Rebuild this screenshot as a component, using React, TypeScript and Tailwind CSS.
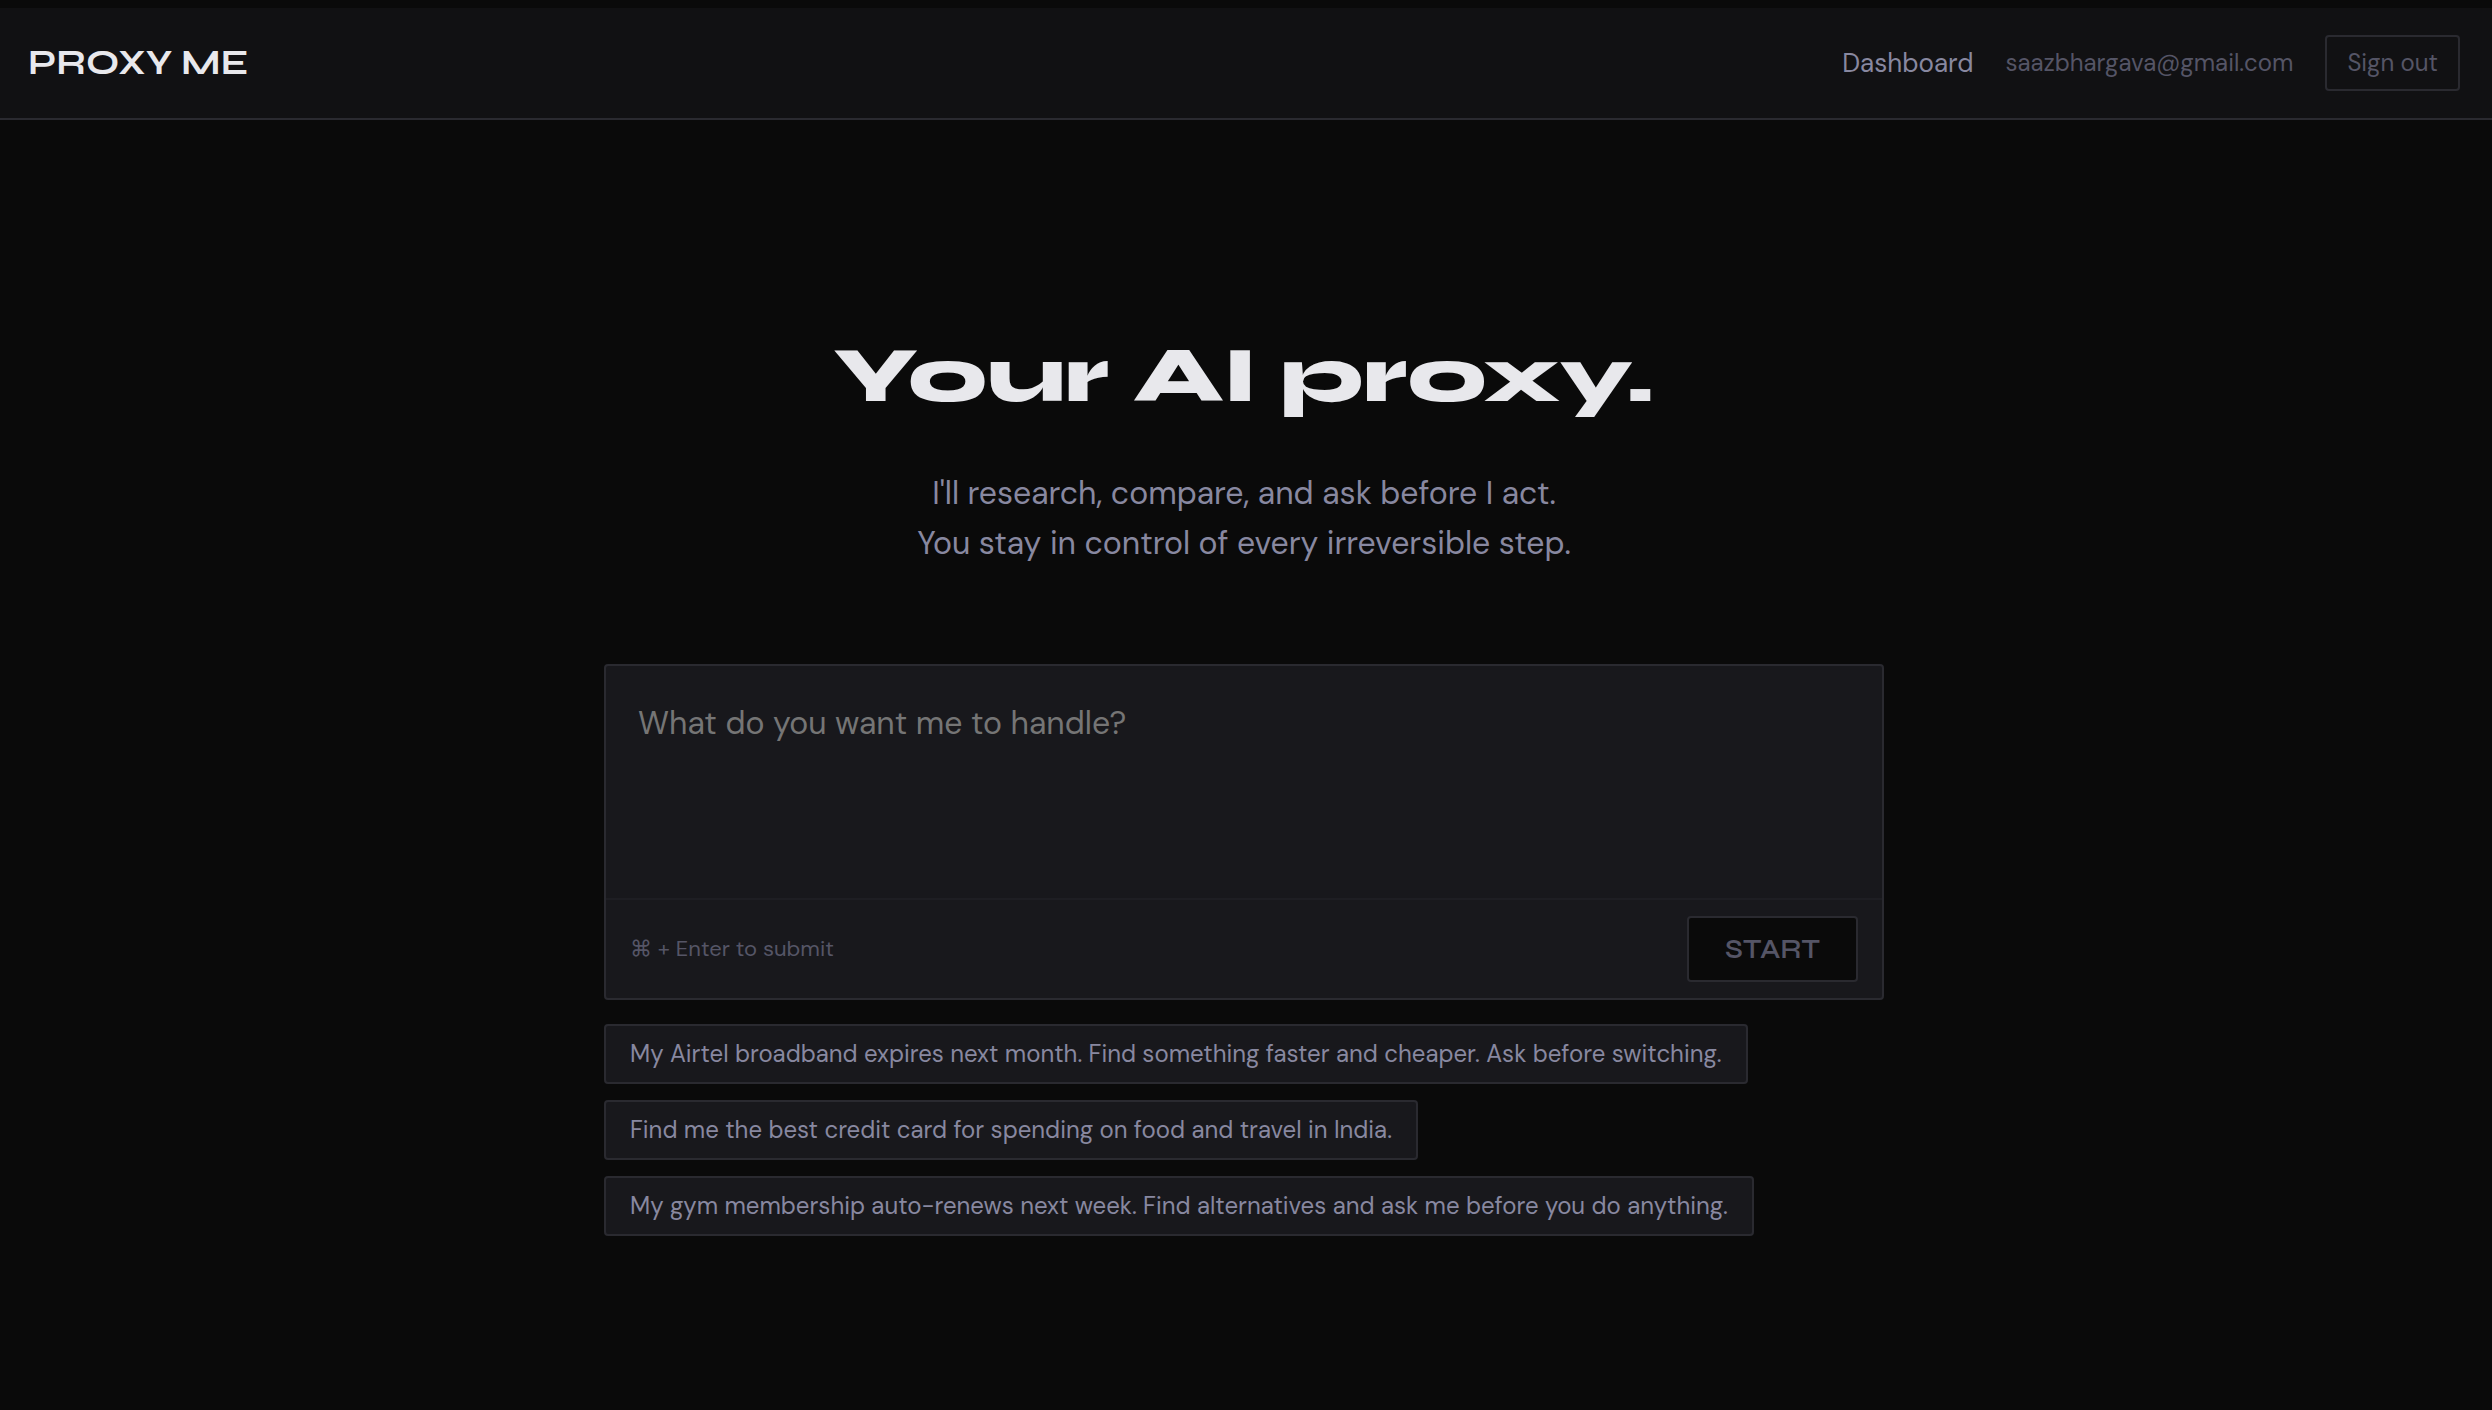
import React, { useState } from 'react';

const examples = [
  'My Airtel broadband expires next month. Find something faster and cheaper. Ask before switching.',
  'Find me the best credit card for spending on food and travel in India.',
  'My gym membership auto-renews next week. Find alternatives and ask me before you do anything.',
];

function Navbar() {
  return (
    <header className="flex items-center justify-between h-28 pl-7 pr-8 bg-[#111113] border-b-2 border-[#2a2a30]">
      <a
        href="/"
        className="font-['Syne','DejaVu_Sans',sans-serif] text-4xl font-bold text-[#e8e8ec]"
      >
        PROXY ME
      </a>
      <nav className="flex items-center gap-8">
        <a href="/dashboard" className="text-[26px] leading-8 text-[#8888a0]">
          Dashboard
        </a>
        <span className="text-2xl text-[#555566]">saazbhargava@gmail.com</span>
        <button
          type="button"
          className="px-5 h-14 text-2xl text-[#555566] border-2 border-[#2a2a30] rounded-sm"
        >
          Sign out
        </button>
      </nav>
    </header>
  );
}

export default function App() {
  const [task, setTask] = useState('');

  return (
    <div className="min-h-screen pt-2 bg-[#0a0a0a] font-['DM_Sans','Inter',sans-serif]">
      <Navbar />

      <main className="flex flex-col items-center pt-52 pr-1">
        <h1 className="font-['Syne','DejaVu_Sans',sans-serif] text-[78px] leading-[96px] font-extrabold text-[#e8e8ec]">
          Your AI proxy.
        </h1>
        <p className="mt-11 text-center text-[32px] leading-[50px] text-[#8888a0]">
          I'll research, compare, and ask before I act.
          <br />
          You stay in control of every irreversible step.
        </p>

        <div className="w-full max-w-[1280px] mt-24">
          <form
            className="bg-[#18181c] border-2 border-[#2a2a30] rounded-sm"
            onSubmit={(e) => e.preventDefault()}
          >
            <textarea
              aria-label="Task"
              rows={4}
              value={task}
              onChange={(e) => setTask(e.target.value)}
              placeholder="What do you want me to handle?"
              className="block w-full h-[232px] px-8 py-8 text-[32px] leading-[50px] text-[#e8e8ec] placeholder:text-[#757575] resize-none outline-none"
            />
            <div className="flex items-center justify-between px-6 py-4 border-t-2 border-[#1e1e23]">
              <span className="text-[22px] leading-8 text-[#555566]">⌘ + Enter to submit</span>
              <button
                type="submit"
                className="px-9 h-[66px] font-['Syne','DejaVu_Sans',sans-serif] text-[28px] leading-8 font-semibold text-[#555566] bg-[#0a0a0a] border-2 border-[#2a2a30] rounded-sm"
              >
                START
              </button>
            </div>
          </form>

          <div className="flex flex-col items-start gap-4 mt-6">
            {examples.map((example) => (
              <button
                key={example}
                type="button"
                onClick={() => setTask(example)}
                className="px-6 h-15 text-left text-2xl text-[#8888a0] bg-[#18181c] border-2 border-[#2a2a30] rounded-sm"
              >
                {example}
              </button>
            ))}
          </div>
        </div>
      </main>
    </div>
  );
}
